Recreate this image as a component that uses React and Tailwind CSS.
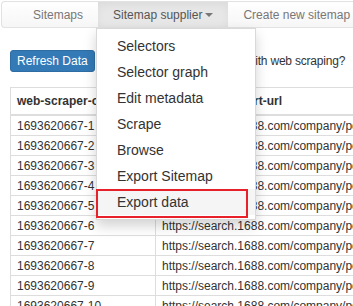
const rows = [1, 2, 3, 4, 5, 6, 7, 8, 9, 10]

const menuItems = ['Selectors', 'Selector graph', 'Edit metadata', 'Scrape', 'Browse', 'Export Sitemap', 'Export data']

const Caret = () => (
  <span className="ml-[3px] inline-block h-0 w-0 border-x-[4px] border-t-[4px] border-x-transparent border-t-[#777]" />
)

const App = () => {
  return (
    <div className="relative h-[306px] w-[353px] overflow-hidden bg-white font-['Liberation_Sans',Arial,sans-serif] text-[#333]">
      <nav className="ml-[1px] mt-[1px] flex h-[27px] rounded-tl-[4px] rounded-bl-[4px] border border-r-0 border-[#e2e2e2] bg-gradient-to-b from-white to-[#f6f6f6] pl-[16px] text-[12px] text-[#777]">
        <div className="flex items-center px-[15px] whitespace-nowrap">Sitemaps</div>
        <div className="flex items-center bg-[#e7e7e7] px-[15px] text-[#555] whitespace-nowrap shadow-[inset_0_3px_9px_rgba(0,0,0,0.05)]">
          Sitemap supplier
          <Caret />
        </div>
        <div className="flex items-center px-[15px] whitespace-nowrap">
          Create new sitemap
          <Caret />
        </div>
      </nav>

      <div className="px-[10px]">
        <div className="mt-[22px] flex items-center">
          <button className="h-[22px] shrink-0 whitespace-nowrap rounded-[3px] border border-[#2e6da4] bg-[#337ab7] px-[6px] text-[12px] text-white">
            Refresh Data
          </button>
          <span className="ml-[96px] shrink-0 whitespace-nowrap text-[12px] tracking-[-0.2px] text-[#333]">Need help with web scraping?</span>
        </div>

        <div className="mt-[15px] w-[420px] border-l border-t border-[#ddd] text-[12px]">
          <div className="flex h-[28px] border-b-2 border-[#ddd] font-bold">
            <div className="flex w-[145px] shrink-0 items-center overflow-hidden whitespace-nowrap border-r border-[#ddd] pl-[6px]">
              web-scraper-order
            </div>
            <div className="flex items-center whitespace-nowrap pl-[6px]">web-scraper-start-url</div>
          </div>
          {rows.map((n) => (
            <div key={n} className="flex h-[20px] border-b border-[#ddd]">
              <div className="flex w-[145px] shrink-0 items-center whitespace-nowrap border-r border-[#ddd] pl-[6px]">
                1693620667-{n}
              </div>
              <div className="flex items-center whitespace-nowrap pl-[6px]">https://search.1688.com/company/pc.html</div>
            </div>
          ))}
        </div>
      </div>

      <div className="absolute left-[96px] top-[28px] w-[160px] border border-[rgba(0,0,0,0.15)] bg-white py-[4px] text-[14px] text-[#333] shadow-[0_6px_12px_rgba(0,0,0,0.175)]">
        {menuItems.map((item, i) => (
          <div
            key={item}
            className={
              i === menuItems.length - 1
                ? 'flex h-[26px] items-center bg-[#f5f5f5] pl-[20px] whitespace-nowrap'
                : 'flex h-[26px] items-center pl-[20px] whitespace-nowrap'
            }
          >
            {item}
          </div>
        ))}
      </div>
      <div className="absolute left-[96px] top-[189px] h-[29px] w-[152px] border-2 border-[#e8202a]" />
    </div>
  )
}

export default App
